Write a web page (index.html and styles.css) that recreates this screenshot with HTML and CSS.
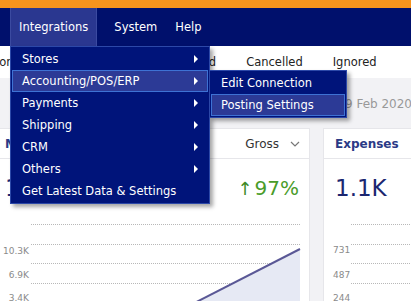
FILE: index.html
```html
<!DOCTYPE html>
<html lang="en">
<head>
    <meta charset="UTF-8">
    <meta name="viewport" content="width=device-width, initial-scale=1.0">
    <title>Dashboard</title>
    <link rel="stylesheet" href="styles.css">
</head>
<body>

    <div class="topbar"></div>

    <nav class="nav">
        <div class="nav-item open">Integrations
            <ul class="menu">
                <li class="sub">Stores</li>
                <li class="sub hover">Accounting/POS/ERP
                    <ul class="menu submenu">
                        <li>Edit Connection</li>
                        <li class="hover">Posting Settings</li>
                    </ul>
                </li>
                <li class="sub">Payments</li>
                <li class="sub">Shipping</li>
                <li class="sub">CRM</li>
                <li class="sub">Others</li>
                <li>Get Latest Data &amp; Settings</li>
            </ul>
        </div>
        <div class="nav-item">System</div>
        <div class="nav-item">Help</div>
    </nav>

    <div class="page">
        <div class="tabs">
            <span>Error</span>
            <span>Open</span>
            <span>Pending</span>
            <span>Posted</span>
            <span>Cancelled</span>
            <span>Ignored</span>
        </div>

        <div class="range">1 Jan 2020 - 29 Feb 2020</div>

        <div class="cards">
            <div class="card card-main">
                <div class="card-head">
                    <span class="card-title">Margin</span>
                    <span class="select">Gross
                        <svg width="10" height="6" viewBox="0 0 10 6"><path d="M1 1l4 4 4-4" fill="none" stroke="#777" stroke-width="1.2"/></svg>
                    </span>
                </div>
                <div class="card-body">
                    <div class="figures">
                        <span class="big">12.4K</span>
                        <span class="change"><span class="up">&#8593;</span>97%</span>
                    </div>
                    <svg class="chart" width="320" height="94" viewBox="0 0 320 94">
                        <g stroke="#b8b8b8" stroke-dasharray="1 1" stroke-width="1">
                            <line x1="40" y1="17.5" x2="310" y2="17.5"/>
                            <line x1="40" y1="37.5" x2="310" y2="37.5"/>
                            <line x1="40" y1="56.5" x2="310" y2="56.5"/>
                            <line x1="40" y1="76.5" x2="310" y2="76.5"/>
                        </g>
                        <polygon points="180,108 309,42 309,100 180,100" fill="#e6e9f4"/>
                        <line x1="180" y1="108" x2="309" y2="42" stroke="#5a5896" stroke-width="2"/>
                        <g class="axis" text-anchor="end">
                            <text x="38" y="47">10.3K</text>
                            <text x="38" y="71">6.9K</text>
                            <text x="38" y="94">3.4K</text>
                        </g>
                    </svg>
                </div>
            </div>

            <div class="card card-side">
                <div class="card-head">
                    <span class="card-title">Expenses</span>
                </div>
                <div class="card-body">
                    <div class="figures">
                        <span class="big">1.1K</span>
                    </div>
                    <svg class="chart" width="100" height="94" viewBox="0 0 100 94">
                        <g stroke="#b8b8b8" stroke-dasharray="1 1" stroke-width="1">
                            <line x1="27" y1="17.5" x2="100" y2="17.5"/>
                            <line x1="27" y1="37.5" x2="100" y2="37.5"/>
                            <line x1="27" y1="56.5" x2="100" y2="56.5"/>
                            <line x1="27" y1="76.5" x2="100" y2="76.5"/>
                        </g>
                        <g class="axis">
                            <text x="9" y="46">731</text>
                            <text x="9" y="71">487</text>
                            <text x="9" y="94">244</text>
                        </g>
                    </svg>
                </div>
            </div>
        </div>
    </div>

</body>
</html>
```

FILE: styles.css
```css
/* base */
body {
    font-family: "DejaVu Sans", Verdana, sans-serif;
    font-size: 11.5px;
    margin: 0;
    background: #f2f2f5;
    color: #222;
    overflow: hidden;
    width: 411px;
    height: 301px;
}
ul { list-style: none; margin: 0; padding: 0; }

.topbar { height: 8px; background: #f7941d; }

/* navigation */
.nav { display: flex; height: 38px; padding-left: 10px; background: #00106c; color: #fff; position: relative; z-index: 5; }
.nav-item { position: relative; line-height: 38px; padding: 0 9px; }
.nav-item.open { background: #2a3790; box-shadow: inset 1px 0 #3b4aa0, inset -1px 0 #3b4aa0; margin-right: 8px; }

/* dropdown */
.menu { position: absolute; top: 100%; left: 0; width: 198px; padding: 1px 0; background: #00147a; border: 1px solid #2c48a8; box-shadow: 3px 3px 4px rgba(0, 0, 0, 0.35); line-height: 20px; }
.menu li { position: relative; margin: 0 1px; padding: 0 9px; border: 1px solid transparent; white-space: nowrap; }
.menu li.hover { background: #2c3a96; border-color: #3e72d4; }
.menu li.sub::after { content: ""; position: absolute; right: 9px; top: 6px; border-left: 4px solid #fff; border-top: 4px solid transparent; border-bottom: 4px solid transparent; }
.submenu { top: -1px; left: 100%; margin-left: 2px; width: 136px; }

/* page */
.page { margin-left: -10px; }
.tabs { display: flex; gap: 30px; height: 32px; line-height: 32px; background: #fff; margin-left: -7px; font-size: 11.5px; }
.range { height: 50px; line-height: 52px; text-align: right; margin-right: -1px; color: #999; font-size: 12px; white-space: nowrap; }

/* cards */
.cards { display: flex; gap: 13px; }
.card { background: #fff; border: 1px solid #e6e6ea; height: 200px; }
.card-main { width: 318px; flex: none; }
.card-side { flex: none; width: 120px; }
.card-head { display: flex; justify-content: space-between; align-items: center; height: 29px; padding: 0 9px 0 14px; border-bottom: 1px solid #e6e6ea; }
.card-side .card-head { padding-left: 11px; }
.card-title { font-weight: bold; color: #2b3a86; font-size: 12px; }
.select { color: #333; font-size: 12px; display: flex; align-items: center; gap: 11px; }
.figures { display: flex; justify-content: space-between; align-items: center; height: 38px; padding: 10px 10px 0 14px; }
.card-side .figures { padding-left: 11px; }
.big { font-size: 23px; color: #1b2670; }
.change { font-size: 20px; color: #4a9c2a; }
.change .up { font-size: 18px; color: #3d8a25; margin-right: 2px; }
.chart { display: block; }
.axis { font-size: 9px; fill: #8a8a8a; }
```
